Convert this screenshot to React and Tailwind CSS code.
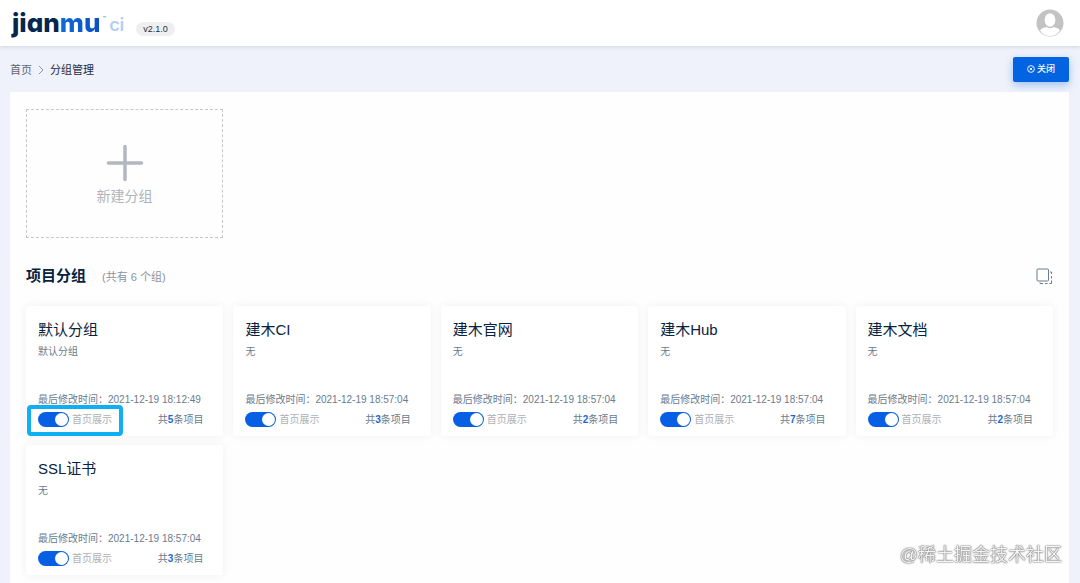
import React, { useState } from "react";

const GROUPS = [
  { name: "默认分组", desc: "默认分组", time: "2021-12-19 18:12:49", count: 5, marked: true },
  { name: "建木CI", desc: "无", time: "2021-12-19 18:57:04", count: 3 },
  { name: "建木官网", desc: "无", time: "2021-12-19 18:57:04", count: 2 },
  { name: "建木Hub", desc: "无", time: "2021-12-19 18:57:04", count: 7 },
  { name: "建木文档", desc: "无", time: "2021-12-19 18:57:04", count: 2 },
  { name: "SSL证书", desc: "无", time: "2021-12-19 18:57:04", count: 3 },
];

function Header() {
  return (
    <header className="relative z-10 flex h-[46px] items-center justify-between bg-white pl-3 pr-4 shadow-[0_1px_4px_rgba(0,0,0,0.12)]">
      <div className="flex items-center">
        <a href="#" className="flex items-center font-[Inter,sans-serif] leading-8 [font-feature-settings:'cv11']">
          <span className="text-[26px] font-extrabold text-[#06274b]">
            jian
            <span className="bg-gradient-to-r from-[#1169d8] to-[#0a4fc4] bg-clip-text text-transparent">mu</span>
          </span>
          <span className="mb-2 ml-[2px] text-[6px] leading-4 text-[#5a7fb8]">™</span>
          <span className="ml-[3px] pt-[3px] text-[18px] font-semibold text-[#b3cdf3]">ci</span>
        </a>
        <span className="ml-3 mt-3 rounded-full bg-[#efeff1] px-[7px] text-[9px] leading-[14px] text-[#25303f]">
          v2.1.0
        </span>
      </div>
      <button aria-label="用户" className="rounded-full">
        <svg width="28" height="28" viewBox="0 0 28 28">
          <circle cx="14" cy="14" r="13.5" fill="#c3c3c3" />
          <path d="M4 21.5C5.5 19 9 17.8 14 17.8s8.500 1.200 10 3.700C21.500 25.300 18 27 14 27S6.500 25.300 4 21.500Z" fill="#fff" />
          <ellipse cx="14" cy="11.500" rx="6.500" ry="7.800" fill="#c3c3c3" />
          <ellipse cx="14" cy="11" rx="5.400" ry="6.700" fill="#fff" />
        </svg>
      </button>
    </header>
  );
}

function Toolbar() {
  return (
    <div className="flex h-[46px] items-center justify-between pl-[10px] pr-[11px]">
      <nav className="flex items-center pt-[2px] text-[11px]">
        <a href="#" className="text-[#5d6675]">首页</a>
        <svg className="mx-[6px]" width="6" height="10" viewBox="0 0 6 10" fill="none" stroke="#8b93a2" strokeWidth="1">
          <path d="M1 1l4 4-4 4" />
        </svg>
        <span className="text-[#1c2b40]">分组管理</span>
      </nav>
      <button className="flex h-[25px] items-center gap-[2px] rounded-[2px] bg-[#0264e0] px-[14px] text-[9px] font-medium text-white shadow-[0_3px_8px_rgba(2,100,224,0.35)]">
        <svg width="8" height="8" viewBox="0 0 9 9" fill="none" stroke="currentColor" strokeWidth="1">
          <circle cx="4.500" cy="4.500" r="3.800" />
          <path d="M3 3l3 3M6 3l-3 3" />
        </svg>
        <span className="pt-px">关闭</span>
      </button>
    </div>
  );
}

function GroupCard({ group }) {
  const [shown, setShown] = useState(true);

  return (
    <article className="relative flex h-[130px] flex-col rounded-[3px] bg-white pl-3 pr-5 pt-3 shadow-[0_0_8px_rgba(30,50,80,0.07)]">
      <h3 className="text-[15px] leading-6 text-[#082340]">{group.name}</h3>
      <p className="text-[10px] leading-5 text-[#6b7b8d]">{group.desc}</p>
      <p className="mt-7 whitespace-nowrap text-[10px] leading-5 text-[#6b7b8d]">
        最后修改时间：{group.time}
      </p>
      <div className="flex h-[18px] items-center justify-between text-[10px]">
        <label className="flex items-center gap-[3px] text-[#adb0b5]">
          <input
            type="checkbox"
            role="switch"
            checked={shown}
            onChange={() => setShown(!shown)}
            className="h-[15px] w-[31px] appearance-none rounded-full bg-gray-300 p-px before:block before:size-[13px] before:rounded-full before:bg-white checked:bg-[#0760e4] checked:before:ml-auto"
          />
          首页展示
        </label>
        <span className="text-[#6b7b8d]">
          共<b className="font-bold text-[#1767dc]">{group.count}</b>条项目
        </span>
      </div>
      {group.marked && (
        <div className="pointer-events-none absolute bottom-0 left-px h-[31px] w-24 rounded-[4px] border-4 border-[#10aef2]" />
      )}
    </article>
  );
}

export default function App() {
  return (
    <div className="flex min-h-screen flex-col bg-[#eff2fb] font-['Liberation_Sans','Noto_Sans_CJK_SC',sans-serif]">
      <Header />
      <Toolbar />
      <main className="ml-[10px] mr-[11px] flex-1 bg-[#fefefe] px-4 pb-2 pt-[17px]">
        <button className="flex h-[129px] w-[197px] flex-col items-center justify-center gap-1 border border-dashed border-[#c4c7cb] pt-1 text-[14px] text-[#b0b3b9]">
          <svg width="38" height="38" viewBox="0 0 38 38" stroke="#b3b7c0" strokeWidth="3.500" strokeLinecap="round">
            <path d="M19 2.500v33M2.500 19h33" />
          </svg>
          新建分组
        </button>

        <div className="mt-6 flex h-7 items-center justify-between">
          <h2 className="flex items-center gap-4 text-[15px] font-bold text-[#082340]">
            项目分组
            <span className="pt-[2px] text-[11px] font-normal text-[#8a93a0]">(共有 6 个组)</span>
          </h2>
          <button aria-label="排序">
            <svg width="17" height="17" viewBox="0 0 17 17" fill="none" stroke="#6b7b8d" strokeWidth="1">
              <rect x="1" y="1" width="11.500" height="12" rx="0.800" />
              <path d="M14 4h1.500v2M15.500 8v2.500M15.500 12.500v3h-2M11.500 15.500H9M7 15.500H4v-1" />
            </svg>
          </button>
        </div>

        <section className="mt-4 grid grid-cols-5 gap-x-[10px] gap-y-[9px]">
          {GROUPS.map((g) => (
            <GroupCard key={g.name} group={g} />
          ))}
        </section>
      </main>

      <div className="pointer-events-none fixed bottom-4 right-[18px] text-[18px] leading-6 text-[#f4f4f4] [text-shadow:0_0_1px_#444,0_0_2px_#666]">
        @稀土掘金技术社区
      </div>
    </div>
  );
}
